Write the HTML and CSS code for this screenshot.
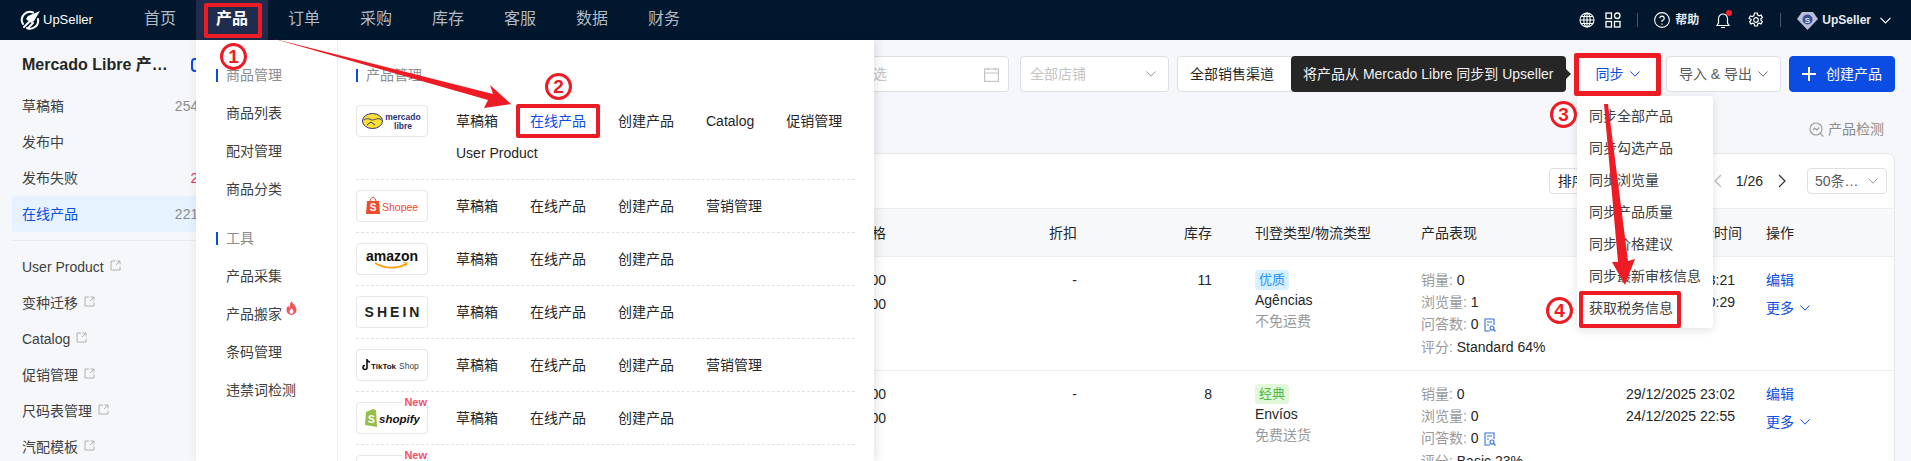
FILE: index.html
```html
<!DOCTYPE html>
<html lang="zh-CN">
<head>
<meta charset="utf-8">
<title>UpSeller</title>
<link rel="stylesheet" href="styles.css">
</head>
<body>
<header class="topbar">
  <div class="brand">
    <svg class="brand-mark" width="21" height="20" viewBox="0 0 21 20" fill="none" stroke="#fff" stroke-width="2" stroke-linecap="round"><path d="M13 2.5A8 8 0 0 0 3 14"/><path d="M7 18a8 8 0 0 0 11-9"/><path d="M20 1 8 6l-2 3 5 4 3-2z" fill="#fff" stroke="none"/><path d="M4 17l5-5M9 17l4-4"/></svg>
    <span>UpSeller</span>
  </div>
  <nav class="nav">
    <a class="nav-item">首页</a><a class="nav-item active">产品</a><a class="nav-item">订单</a><a class="nav-item">采购</a><a class="nav-item">库存</a><a class="nav-item">客服</a><a class="nav-item">数据</a><a class="nav-item">财务</a>
  </nav>
  <div class="top-tools">
    <svg class="tool" width="16" height="16" viewBox="0 0 16 16" fill="none" stroke="#fff" stroke-width="1.1"><circle cx="8" cy="8" r="7"/><ellipse cx="8" cy="8" rx="3.2" ry="7"/><path d="M8 1v14M1 8h14M2 4.500h12M2 11.500h12"/></svg>
    <svg class="tool grid" width="16" height="16" viewBox="0 0 16 16" fill="none" stroke="#fff" stroke-width="1.3"><rect x="1" y="1" width="5.500" height="5.500"/><rect x="1" y="9.500" width="5.500" height="5.500"/><rect x="9.500" y="9.500" width="5.500" height="5.500"/><rect x="9.500" y="1" width="5.500" height="5.500" rx="2.700"/></svg>
    <i class="tool-sep"></i>
    <svg class="tool" width="16" height="16" viewBox="0 0 16 16" fill="none" stroke="#fff" stroke-width="1.1"><circle cx="8" cy="8" r="7.400"/><path d="M5.800 6.200A2.200 2.200 0 1 1 8 8.500V10M8 11.500v1.200"/></svg>
    <span class="help">帮助</span>
    <span class="bell">
      <svg width="14" height="17" viewBox="0 0 14 17" fill="none" stroke="#fff" stroke-width="1.2"><path d="M7 2a4.500 4.500 0 0 0-4.500 4.500V11L1 13.500h12L11.500 11V6.500A4.500 4.500 0 0 0 7 2zM5 15.500h4"/></svg>
      <i class="bell-dot"></i>
    </span>
    <svg class="tool gear" width="16" height="16" viewBox="0 0 16 16" fill="none" stroke="#fff" stroke-width="1.2"><circle cx="8" cy="8" r="2.300"/><path d="M6.700 1h2.600l.4 2 1.500.8 1.900-.7 1.300 2.300-1.500 1.300v1.600l1.500 1.300-1.300 2.300-1.900-.7-1.500.8-.4 2H6.700l-.4-2-1.500-.8-1.900.7-1.300-2.300 1.500-1.300V7.500L1.100 6.200l1.300-2.300 1.900.7 1.500-.8z"/></svg>
    <i class="tool-sep"></i>
    <svg class="tool" width="21" height="19" viewBox="0 0 21 19"><path d="M5 1h11l5 7-10.500 11L0 8z" fill="#b9bfd6"/><circle cx="10.500" cy="8.500" r="5" fill="#3a4f9c"/><text x="10.500" y="11.500" class="gem-letter">S</text></svg>
    <span class="user">UpSeller</span>
    <svg class="user-chevron" width="11" height="7" viewBox="0 0 11 7" fill="none" stroke="#fff" stroke-width="1.200"><path d="M.5.800 5.500 6l5-5.200"/></svg>
  </div>
</header>

<div class="layout">
  <aside class="sidebar">
    <div class="side-title"><strong>Mercado Libre 产…</strong><i class="side-ring"></i></div>
    <a class="side-item"><span>草稿箱</span><span class="count">2541</span></a>
    <a class="side-item"><span>发布中</span></a>
    <a class="side-item"><span>发布失败</span><span class="count red">21</span></a>
    <a class="side-item current"><span>在线产品</span><span class="count">2213</span></a>
    <hr class="side-rule">
    <a class="side-item"><span class="ext">User Product<svg class="ext-icon" viewBox="0 0 11 11"><path d="M5 1H1v9h9V6.500M6.500 1H10v3.500M10 1 6 5"/></svg></span></a>
    <a class="side-item"><span class="ext">变种迁移<svg class="ext-icon" viewBox="0 0 11 11"><path d="M5 1H1v9h9V6.500M6.500 1H10v3.500M10 1 6 5"/></svg></span></a>
    <a class="side-item"><span class="ext">Catalog<svg class="ext-icon" viewBox="0 0 11 11"><path d="M5 1H1v9h9V6.500M6.500 1H10v3.500M10 1 6 5"/></svg></span></a>
    <a class="side-item"><span class="ext">促销管理<svg class="ext-icon" viewBox="0 0 11 11"><path d="M5 1H1v9h9V6.500M6.500 1H10v3.500M10 1 6 5"/></svg></span></a>
    <a class="side-item"><span class="ext">尺码表管理<svg class="ext-icon" viewBox="0 0 11 11"><path d="M5 1H1v9h9V6.500M6.500 1H10v3.500M10 1 6 5"/></svg></span></a>
    <a class="side-item"><span class="ext">汽配模板<svg class="ext-icon" viewBox="0 0 11 11"><path d="M5 1H1v9h9V6.500M6.500 1H10v3.500M10 1 6 5"/></svg></span></a>
  </aside>

  <main class="main">
    <div class="filters">
      <div class="field date"><span class="placeholder">创建时间筛选</span>
        <svg width="15" height="15" viewBox="0 0 15 15" fill="none" stroke="#c4c4c4" stroke-width="1.200"><rect x=".6" y="2" width="13.800" height="12.400"/><path d="M.6 6h13.800M4 .5V3M11 .5V3"/></svg>
      </div>
      <div class="field shop"><span class="placeholder">全部店铺</span>
        <svg width="10" height="6" viewBox="0 0 10 6" fill="none" stroke="#999" stroke-width="1"><path d="M.5.500 5 5.200 9.500.5"/></svg>
      </div>
      <div class="field channel">全部销售渠道</div>
      <div class="grow"></div>
      <button class="btn sync">同步
        <svg width="10" height="6" viewBox="0 0 10 6" fill="none" stroke="#0b4de3" stroke-width="1"><path d="M.5.500 5 5.200 9.500.5"/></svg>
      </button>
      <button class="btn transfer">导入 &amp; 导出
        <svg width="10" height="6" viewBox="0 0 10 6" fill="none" stroke="#666" stroke-width="1"><path d="M.5.500 5 5.200 9.500.5"/></svg>
      </button>
      <button class="btn create"><svg width="14" height="14" viewBox="0 0 14 14" stroke="#fff" stroke-width="2"><path d="M7 0v14M0 7h14"/></svg>创建产品</button>
    </div>
    <div class="inspect">
      <svg width="15" height="15" viewBox="0 0 15 15" fill="none" stroke="#999" stroke-width="1.100"><circle cx="7" cy="7" r="6"/><path d="M11.300 11.300 14.300 14.500M3.800 8l2-2 2 2 2.500-2.500"/></svg>
      <span>产品检测</span>
    </div>
    <section class="card">
      <div class="card-tools">
        <div class="mini-select sort">排序方式</div>
        <div class="pager">
          <svg class="page-prev" width="10" height="14" viewBox="0 0 10 14" fill="none" stroke="#bbb" stroke-width="1.200"><path d="M8 1 2 7l6 6"/></svg>
          <span>1/26</span>
          <svg class="page-next" width="10" height="14" viewBox="0 0 10 14" fill="none" stroke="#333" stroke-width="1.200"><path d="M2 1l6 6-6 6"/></svg>
        </div>
        <div class="mini-select size"><span>50条…</span>
          <svg width="10" height="6" viewBox="0 0 10 6" fill="none" stroke="#999" stroke-width="1"><path d="M.5.500 5 5.200 9.500.5"/></svg>
        </div>
      </div>
      <div class="table-row head">
        <div class="right">价格</div><div class="right">折扣</div><div class="right">库存</div>
        <div class="c-list">刊登类型/物流类型</div><div>产品表现</div><div class="nowrap">创建时间/更新时间</div><div>操作</div>
      </div>
      <div class="table-row body">
        <div class="right price"><p>R$ 100.00</p><p>R$ 100.00</p></div>
        <div class="right">-</div>
        <div class="right">11</div>
        <div class="c-list listing"><span class="tag blue">优质</span><p>Agências</p><p class="muted">不免运费</p></div>
        <div class="stats">
          <p><span class="muted">销量:</span> 0</p><p><span class="muted">浏览量:</span> 1</p>
          <p><span class="muted">问答数:</span> 0 <svg class="qa" viewBox="0 0 12 14" fill="none" stroke="#2f6fe0" stroke-width="1.100"><path d="M6 13H1V1h9v6"/><path d="M3 4h5M3 7h2"/><circle cx="8" cy="10" r="2"/><path d="m9.500 11.500 2 2"/></svg></p>
          <p><span class="muted">评分:</span> Standard 64%</p>
        </div>
        <div class="times"><p>29/12/2025 23:21</p><p>24/12/2025 20:29</p></div>
        <div class="actions"><a>编辑</a><a>更多 <svg width="10" height="6" viewBox="0 0 10 6" fill="none" stroke="#0b4de3" stroke-width="1"><path d="M.5.500 5 5.200 9.500.5"/></svg></a></div>
      </div>
      <div class="table-row body">
        <div class="right price"><p>R$ 120.00</p><p>R$ 120.00</p></div>
        <div class="right">-</div>
        <div class="right">8</div>
        <div class="c-list listing"><span class="tag green">经典</span><p>Envíos</p><p class="muted">免费送货</p></div>
        <div class="stats">
          <p><span class="muted">销量:</span> 0</p><p><span class="muted">浏览量:</span> 0</p>
          <p><span class="muted">问答数:</span> 0 <svg class="qa" viewBox="0 0 12 14" fill="none" stroke="#2f6fe0" stroke-width="1.100"><path d="M6 13H1V1h9v6"/><path d="M3 4h5M3 7h2"/><circle cx="8" cy="10" r="2"/><path d="m9.500 11.500 2 2"/></svg></p>
          <p><span class="muted">评分:</span> Basic 23%</p>
        </div>
        <div class="times"><p>29/12/2025 23:02</p><p>24/12/2025 22:55</p></div>
        <div class="actions"><a>编辑</a><a>更多 <svg width="10" height="6" viewBox="0 0 10 6" fill="none" stroke="#0b4de3" stroke-width="1"><path d="M.5.500 5 5.200 9.500.5"/></svg></a></div>
      </div>
    </section>
  </main>
</div>

<div class="mega">
  <div class="mega-left">
    <div class="mega-head">商品管理</div>
    <a class="mega-link">商品列表</a>
    <a class="mega-link">配对管理</a>
    <a class="mega-link">商品分类</a>
    <div class="mega-head second">工具</div>
    <a class="mega-link">产品采集</a>
    <a class="mega-link hot">产品搬家<svg class="flame" viewBox="0 0 11 14"><path d="M5.500 0c.6 2.500 5 4.500 5 9a5 5 0 0 1-10 0c0-2 .9-3.200 1.800-4.200.2 1 .6 1.700 1.300 2C3.400 4.500 4.200 1.800 5.500 0z" fill="#f4525f"/><path d="M5.500 7c.3 1 2 2 2 3.800a2 2 0 0 1-4 0c0-1.500 1.500-2.300 2-3.800z" fill="#fff"/></svg></a>
    <a class="mega-link">条码管理</a>
    <a class="mega-link">违禁词检测</a>
  </div>
  <div class="mega-right">
    <div class="mega-head">产品管理</div>
    <div class="market">
      <div class="logo">
        <svg width="60" height="24" viewBox="0 0 60 24"><ellipse cx="10.500" cy="12" rx="10" ry="7.500" fill="#ffe135" stroke="#2d3277" stroke-width="1"/><path d="M2 11c4-3 6 0 8.500 0S16 8 19.500 11M5 16l4-3 4 3" fill="none" stroke="#2d3277" stroke-width="1"/><text x="41" y="10.500" class="logo-ml">mercado</text><text x="41" y="19.500" class="logo-ml">libre</text></svg>
      </div>
      <div class="market-links"><a>草稿箱</a><a class="link-on">在线产品</a><a>创建产品</a><a>Catalog</a><a>促销管理</a><a>User Product</a></div>
    </div>
    <div class="market">
      <div class="logo">
        <svg width="52" height="20" viewBox="0 0 52 20"><path d="M1 5h12l1 13H0z" fill="#ee4d2d"/><path d="M4 6c0-6 6-6 6 0" fill="none" stroke="#ee4d2d"/><text x="7" y="15" class="logo-s">S</text><text x="16" y="14.500" class="logo-shopee">Shopee</text></svg>
      </div>
      <div class="market-links"><a>草稿箱</a><a>在线产品</a><a>创建产品</a><a>营销管理</a></div>
    </div>
    <div class="market">
      <div class="logo">
        <svg width="54" height="24" viewBox="0 0 54 24"><text x="27" y="14" class="logo-amazon">amazon</text><path d="M10 16c10 6 22 6 31 1" fill="none" stroke="#f90" stroke-width="1.600"/><path d="m38 15.500 4 .5-1.500 3.500" fill="none" stroke="#f90" stroke-width="1"/></svg>
      </div>
      <div class="market-links"><a>草稿箱</a><a>在线产品</a><a>创建产品</a></div>
    </div>
    <div class="market">
      <div class="logo"><span class="logo-shein">SHEIN</span></div>
      <div class="market-links"><a>草稿箱</a><a>在线产品</a><a>创建产品</a></div>
    </div>
    <div class="market">
      <div class="logo">
        <svg width="60" height="16" viewBox="0 0 60 16"><path d="M5 2v8.500a2 2 0 1 1-2-2M5 2c.3 2 1.500 3 3 3" fill="none" stroke="#111" stroke-width="1.600"/><text x="9" y="12" class="logo-tt">TikTok</text><text x="37" y="12" class="logo-shop">Shop</text></svg>
      </div>
      <div class="market-links"><a>草稿箱</a><a>在线产品</a><a>创建产品</a><a>营销管理</a></div>
    </div>
    <div class="market">
      <div class="logo">
        <span class="new">New</span>
        <svg width="56" height="20" viewBox="0 0 56 20"><path d="M2 4 9 1l3 1 1 17-12-2z" fill="#95bf47"/><text x="4" y="15" class="logo-bag">S</text><text x="15" y="15" class="logo-shopify">shopify</text></svg>
      </div>
      <div class="market-links"><a>草稿箱</a><a>在线产品</a><a>创建产品</a></div>
    </div>
    <div class="market">
      <div class="logo"><span class="new">New</span></div>
    </div>
  </div>
</div>

<div class="tooltip">将产品从 Mercado Libre 同步到 Upseller</div>

<ul class="sync-menu">
  <li>同步全部产品</li><li>同步勾选产品</li><li>同步浏览量</li><li>同步产品质量</li><li>同步价格建议</li><li>同步最新审核信息</li><li>获取税务信息</li>
</ul>

<div class="mark box-nav"></div>
<div class="mark box-online"></div>
<div class="mark box-sync"></div>
<div class="mark box-tax"></div>
<span class="step s1">1</span>
<span class="step s2">2</span>
<span class="step s3">3</span>
<span class="step s4">4</span>
<svg class="arrows" width="1911" height="461" viewBox="0 0 1911 461">
  <path d="M271 38 493 94 490 85 511 104 484 108 488 100z" fill="#ed1c24"/>
  <path d="M1604 104 1608 104 1628 261 1635 259 1625 285 1612 262 1618 262z" fill="#ed1c24"/>
</svg>
</body>
</html>
```
FILE: styles.css
```css
* { box-sizing: border-box; }
html, body { margin: 0; height: 461px; overflow: hidden; }
body {
  position: relative;
  width: 1911px;
  background: #f5f7fa;
  color: #262626;
  font: 14px/22px "Liberation Sans", "Noto Sans CJK SC", sans-serif;
}
p { margin: 0; }
a { color: inherit; text-decoration: none; }

.topbar { height: 40px; background: #00172e; display: flex; align-items: center; color: #fff; }
.brand { width: 124px; padding-left: 20px; display: flex; align-items: center; gap: 2px; font-size: 13px; font-weight: 500; flex: none; }
.brand-mark { flex: none; }
.nav { display: flex; height: 40px; }
.nav-item { width: 72px; text-align: center; line-height: 38px; font-size: 16px; color: #b4bac2; }
.nav-item.active { background: #1f2c4d; color: #fff; font-weight: 700; }
.top-tools { margin-left: auto; padding-right: 20px; display: flex; align-items: center; height: 40px; }
.tool { flex: none; }
.tool.grid { margin-left: 10px; }
.tool-sep { width: 1px; height: 14px; background: #4a5665; margin: 0 16px; }
.help { font-size: 12px; font-weight: 700; margin-left: 5px; color: #e8eaee; }
.bell { position: relative; margin-left: 17px; height: 17px; width: 14px; display: block; }
.bell svg { display: block; }
.bell-dot { position: absolute; right: -2px; top: -2px; width: 6px; height: 6px; background: #f5222d; border-radius: 50%; }
.tool.gear { margin-left: 18px; }
.user { margin-left: 4px; font-size: 12px; font-weight: 700; color: #e8eaee; }
.user-chevron { margin-left: 9px; }
.gem-letter { font: 700 8px "Liberation Sans", sans-serif; fill: #dfe3f3; text-anchor: middle; }

.layout { display: flex; height: 421px; }
.sidebar { width: 230px; flex: none; padding: 13px 12px 0; overflow: hidden; }
.side-title { display: flex; align-items: center; height: 24px; padding-left: 10px; margin-bottom: 11px; font-size: 16px; }
.side-title strong { white-space: nowrap; }
.side-ring { width: 14px; height: 14px; border: 2px solid #0b4de3; border-radius: 4px; margin-left: 23px; flex: none; }
.side-item { display: flex; justify-content: space-between; align-items: center; height: 36px; padding: 0 12px 0 10px; border-radius: 4px; color: #404040; }
.side-item.current { background: #e6f2ff; color: #0b4de3; }
.count { color: #8c8c8c; }
.count.red { color: #e8354a; }
.side-rule { border: 0; border-top: 1px solid #e8eaed; margin: 8px 0; height: 1px; }
.ext { display: flex; align-items: center; gap: 6px; }
.ext-icon { width: 11px; height: 11px; fill: none; stroke: #b0b0b0; stroke-width: 1; margin-top: -4px; }

.main { flex: 1; min-width: 0; padding: 16px 16px 0 0; }
.filters { display: flex; align-items: stretch; height: 36px; gap: 8px; }
.field { background: #fff; border: 1px solid #dcdfe4; border-radius: 4px; display: flex; align-items: center; justify-content: space-between; padding: 0 9px; flex: none; }
.field.date { width: 279px; margin-left: 500px; margin-right: 3px; justify-content: flex-end; gap: 97px; }
.field.shop { width: 149px; padding-right: 12px; }
.field.channel { width: 140px; padding-left: 12px; }
.placeholder { color: #c4c4c4; }
.grow { flex: 1; }
.btn { font: inherit; height: 36px; border-radius: 4px; border: 1px solid #dcdfe4; background: #fff; color: #595959; display: flex; align-items: center; justify-content: center; gap: 6px; padding: 0; flex: none; }
.btn.sync { width: 81px; color: #0b4de3; }
.btn.transfer { width: 115px; }
.btn.create { width: 106px; background: #0b4de3; border-color: #0b4de3; color: #fff; gap: 10px; }
.inspect { height: 61px; padding-top: 26px; display: flex; justify-content: flex-end; align-items: flex-start; gap: 4px; padding-right: 11px; color: #8c8c8c; }
.inspect svg { margin-top: 4px; }
.card { background: #fff; border: 1px solid #e5e7eb; border-radius: 0 8px 0 0; }
.card-tools { height: 54px; display: flex; align-items: center; justify-content: flex-end; padding-right: 7px; }
.mini-select { height: 26px; border: 1px solid #dcdfe4; border-radius: 4px; display: flex; align-items: center; }
.mini-select.sort { width: 152px; padding-left: 8px; margin-right: 12px; }
.pager { display: flex; align-items: center; margin-right: 20px; }
.page-prev { margin-right: 13px; }
.page-next { margin-left: 14px; }
.mini-select.size { width: 80px; padding: 0 8px 0 7px; justify-content: space-between; color: #595959; }
.table-row { display: grid; grid-template-columns: minmax(0, 1fr) 191px 135px 209px 205px 140px 128px; }
.table-row.head { height: 49px; align-items: center; background: #f7f8f9; border-top: 1px solid #eceef0; border-bottom: 1px solid #eceef0; }
.table-row.body { height: 114px; padding-top: 12px; border-bottom: 1px solid #eceef0; }
.right { text-align: right; }
.c-list { padding-left: 43px; }
.nowrap { white-space: nowrap; }
.price p { line-height: 25px; margin-top: -1px; }
.listing { line-height: 21px; margin-top: 1px; }
.tag { display: block; width: 34px; height: 20px; text-align: center; line-height: 20px; border-radius: 4px; font-size: 13px; }
.tag.blue { background: #d6f0ff; color: #1f8fff; }
.tag.green { background: #e3f8da; color: #52b84a; }
.muted { color: #999; }
.stats p { line-height: 22px; }
.stats p:last-child { margin-top: 1px; }
.qa { width: 12px; height: 14px; vertical-align: -3px; margin-left: 2px; }
.times p { line-height: 22px; }
.actions { display: flex; flex-direction: column; gap: 6px; color: #0b4de3; }
.actions svg { vertical-align: 2px; margin-left: 2px; }

.mega { position: absolute; left: 196px; top: 40px; width: 678px; height: 421px; background: #fff; display: flex; box-shadow: 2px 0 10px rgba(0,0,0,.12); }
.mega-left { width: 142px; flex: none; border-right: 1px solid #eee; padding: 16px 0 0 20px; }
.mega-head { display: flex; align-items: center; height: 38px; color: #8c8c8c; }
.mega-head::before { content: ""; width: 2px; height: 13px; background: #0b4de3; margin-right: 8px; }
.mega-head.second { margin-top: 11px; }
.mega-link { position: relative; display: block; height: 38px; line-height: 38px; padding-left: 10px; color: #404040; }
.flame { position: absolute; left: 70px; top: 6px; width: 11px; height: 14px; }
.mega-right { flex: 1; padding: 16px 19px 0 18px; overflow: hidden; }
.mega-right > .mega-head { margin-bottom: 1px; }
.market { display: flex; padding: 10px 0; border-bottom: 1px dashed #e2e2e2; }
.logo { position: relative; width: 72px; height: 32px; flex: none; margin-right: 28px; border: 1px solid #e6e6e6; border-radius: 4px; display: flex; align-items: center; justify-content: center; }
.market-links { display: flex; flex-wrap: wrap; column-gap: 32px; line-height: 32px; }
.link-on { color: #0b4de3; }
.new { position: absolute; right: 0; top: -7px; background: #fff; color: #f4526c; font-size: 11px; line-height: 12px; font-weight: 700; padding-left: 2px; }
.logo-ml { font: 700 8.500px "Liberation Sans", sans-serif; fill: #2d3277; text-anchor: middle; }
.logo-s { font: 700 10px "Liberation Sans", sans-serif; fill: #fff; text-anchor: middle; }
.logo-shopee { font: 500 10.500px "Liberation Sans", sans-serif; fill: #ee4d2d; }
.logo-amazon { font: 700 14px "Liberation Sans", sans-serif; fill: #111; text-anchor: middle; }
.logo-shein { font: 700 14px "Liberation Sans", sans-serif; letter-spacing: 3px; margin-right: -3px; color: #222; }
.logo-tt { font: 700 8px "Liberation Sans", sans-serif; fill: #111; }
.logo-shop { font: 400 8.500px "Liberation Sans", sans-serif; fill: #444; }
.logo-bag { font: 700 10px "Liberation Sans", sans-serif; fill: #fff; }
.logo-shopify { font: italic 700 11.500px "Liberation Sans", sans-serif; fill: #111; }

.tooltip { position: absolute; left: 1291px; top: 56px; width: 275px; height: 36px; background: #262626; color: #f2f2f2; border-radius: 4px; line-height: 36px; padding-left: 12px; white-space: nowrap; }
.tooltip::after { content: ""; position: absolute; right: -5px; top: 13px; border-left: 5px solid #262626; border-top: 5px solid transparent; border-bottom: 5px solid transparent; }
.sync-menu { position: absolute; left: 1577px; top: 96px; width: 136px; height: 232px; margin: 0; padding: 4px 0 0 12px; list-style: none; background: #fff; border-radius: 4px; box-shadow: 0 2px 10px rgba(0,0,0,.12); color: #404040; }
.sync-menu li { height: 32px; line-height: 32px; white-space: nowrap; }

.mark { position: absolute; border: 4px solid #ed1c24; border-radius: 2px; }
.box-nav { left: 204px; top: 3px; width: 58px; height: 35px; }
.box-online { left: 516px; top: 104px; width: 84px; height: 34px; }
.box-sync { left: 1574px; top: 53px; width: 87px; height: 43px; border-width: 5px; }
.box-tax { left: 1579px; top: 291px; width: 102px; height: 37px; }
.step { position: absolute; width: 27px; height: 27px; border: 3px solid #ed1c24; border-radius: 50%; background: #fff; color: #ed1c24; font: 700 19px/21px "Liberation Sans", sans-serif; text-align: center; }
.s1 { left: 220px; top: 43px; }
.s2 { left: 545px; top: 73px; }
.s3 { left: 1550px; top: 101px; }
.s4 { left: 1546px; top: 297px; }
.arrows { position: absolute; left: 0; top: 0; pointer-events: none; }
```
